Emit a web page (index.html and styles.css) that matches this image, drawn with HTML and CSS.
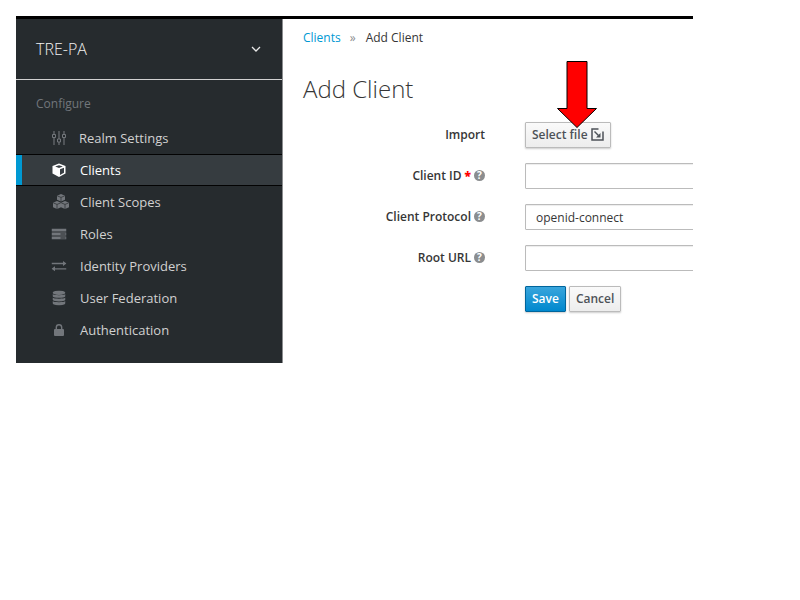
FILE: index.html
```html
<!DOCTYPE html>
<html>
<head>
<title>Add Client</title>
<meta charset="utf-8" />
<link rel="stylesheet" href="styles.css">
</head>
<body>
<div class="frame">
  <div class="sidebar">
    <div class="realm">
      <span>TRE-PA</span>
      <svg class="chevron" width="10" height="6" viewBox="0 0 10 6"><path d="M1 1l4 4 4-4" fill="none" stroke="#e8e8e8" stroke-width="1.3"/></svg>
    </div>
    <div class="nav-head">Configure</div>
    <ul class="nav">
      <li class="first">
        <svg class="ico" width="14" height="14" viewBox="0 0 14 14"><path d="M2 0v14M7 0v14M12 0v14" stroke="#72767b" stroke-width="1.100" fill="none"/><path d="M.5 3.500h3v3h-3zM5.500 8h3v3h-3zM10.500 3.500h3v3h-3z" fill="#262b2e" stroke="#72767b"/></svg>
        <span>Realm Settings</span>
      </li>
      <li class="active">
        <svg class="ico" width="14" height="14" viewBox="0 0 14 14"><path d="M7 .5l6.500 2.500v7.500L7 14 .5 10.500V3z" fill="#fff"/><path d="M7 2.200l3.800 1.300L7 5 3.200 3.500z" fill="#393f44"/><path d="M8 6.300l4-1.500v5L8 12z" fill="#393f44"/></svg>
        <span>Clients</span>
      </li>
      <li>
        <svg class="ico wide" width="18" height="16" viewBox="0 0 18 16"><path d="M9 0l4 1.700v4L9 7.400 5 5.700v-4zM5 7l4 1.700v4.500L5 15l-4-1.800V8.700zM13 7l4 1.700v4.500L13 15l-4-1.800V8.700z" fill="#72767b"/><path d="M5.300 1.900L9 3.400l3.700-1.500M9 3.400v4M1.300 8.900L5 10.400l3.700-1.500M5 10.400V15M9.300 8.900l3.700 1.500 3.700-1.500M13 10.400V15" stroke="#262b2e" stroke-width=".7" fill="none"/></svg>
        <span>Client Scopes</span>
      </li>
      <li>
        <svg class="ico" width="15" height="11" viewBox="0 0 15 11"><path d="M0 0h15v3H0zM0 4h15v3H0zM0 8h15v3H0z" fill="#72767b"/><path d="M9 5.500h5M9 9.500h5" stroke="#262b2e"/></svg>
        <span>Roles</span>
      </li>
      <li>
        <svg class="ico" width="15" height="11" viewBox="0 0 15 11"><path d="M0 3h12.500M2 8.300h13" stroke="#72767b" stroke-width="1.300" fill="none"/><path d="M11.500 0.500L15 3l-3.500 2.500zM3.500 5.800L0 8.300l3.500 2.500z" fill="#72767b"/></svg>
        <span>Identity Providers</span>
      </li>
      <li>
        <svg class="ico" width="13" height="15" viewBox="0 0 13 15"><ellipse cx="6.500" cy="2.200" rx="6.500" ry="2.200" fill="#72767b"/><path d="M0 3.500c1 1.600 12 1.600 13 0v2.200c-1 2.200-12 2.200-13 0zM0 7c1 1.600 12 1.600 13 0v2.300c-1 2.200-12 2.200-13 0zM0 10.600c1 1.600 12 1.600 13 0v2.200c-1 2.800-12 2.800-13 0z" fill="#72767b"/></svg>
        <span>User Federation</span>
      </li>
      <li>
        <svg class="ico" width="10" height="12" viewBox="0 0 10 12"><path d="M2.300 5V3.500a2.700 2.700 0 0 1 5.400 0V5" fill="none" stroke="#72767b" stroke-width="1.400"/><rect y="5" width="10" height="7" rx="1" fill="#72767b"/></svg>
        <span>Authentication</span>
      </li>
    </ul>
  </div>

  <div class="content">
    <div class="crumbs">
      <a class="crumb-link">Clients</a>
      <span class="crumb-sep">&raquo;</span>
      <span>Add Client</span>
    </div>
    <h1>Add Client</h1>
    <form class="form">
      <label>Import</label>
      <div class="field"><button type="button" class="btn">Select file
        <svg class="ext" width="13" height="13" viewBox="0 0 13 13"><path d="M7.500 1H1v11h11V3.500" fill="none" stroke="#4d5258" stroke-width="1.500"/><path d="M3.500 3.500l4 4" stroke="#4d5258" stroke-width="1.500" fill="none"/><path d="M9.500 5v4.500H5z" fill="#4d5258"/></svg>
      </button></div>

      <label>Client ID <b class="req">*</b> <i class="help">?</i></label>
      <div class="field"><div class="input"></div></div>

      <label>Client Protocol <i class="help">?</i></label>
      <div class="field"><div class="input">openid-connect</div></div>

      <label>Root URL <i class="help">?</i></label>
      <div class="field"><div class="input"></div></div>

      <span></span>
      <div class="field actions">
        <button type="button" class="btn primary">Save</button>
        <button type="button" class="btn">Cancel</button>
      </div>
    </form>
  </div>

  <svg class="arrow" width="42" height="68" viewBox="0 0 42 68"><path d="M11 .5h20v47h9.500L21 66.500 1.500 47.500H11z" fill="#f00" stroke="#000"/></svg>
</div>
</body>
</html>
```

FILE: styles.css
```css
body {
  margin: 0;
  background: #fff;
  font-family: "Open Sans", "Liberation Sans", sans-serif;
  font-size: 12px;
  color: #363636;
}
.frame {
  position: relative;
  display: flex;
  align-items: flex-start;
  width: 677px;
  height: 347px;
  margin: 16px 0 0 16px;
  border-top: 3px solid #000;
  box-sizing: border-box;
  overflow: hidden;
}
.sidebar {
  width: 266px;
  height: 344px;
  flex: none;
  background: #262b2e;
  color: #dfdfdf;
  border-right: 1px solid #8b8d8f;
}
.realm {
  display: flex;
  align-items: center;
  justify-content: space-between;
  height: 60px;
  padding: 0 21px 0 20px;
  border-bottom: 1px solid #d1d1d1;
  font-size: 16px;
  font-weight: 300;
  color: #f1f1f1;
}
.nav-head {
  margin-top: 16px;
  padding-left: 20px;
  font-size: 12px;
  line-height: 16px;
  color: #72767b;
}
.nav {
  list-style: none;
  margin: 0;
  padding: 0;
}
.nav li {
  display: flex;
  align-items: center;
  height: 32px;
  padding-left: 64px;
  position: relative;
  font-size: 13px;
  color: #d1d1d1;
}
.nav li.first {
  margin-top: 10px;
  padding-left: 63px;
}
.nav li.active {
  height: 30px;
  border-top: 1px solid #030303;
  border-bottom: 1px solid #030303;
  background: #363c40;
  color: #fff;
}
.nav li.active::before {
  content: "";
  position: absolute;
  left: 0;
  top: 0;
  bottom: 0;
  width: 6px;
  background: #0099d3;
}
.ico {
  position: absolute;
  left: 43px;
  top: 50%;
  transform: translate(-50%, -50%);
}
.ico.wide {
  left: 45px;
}
.content {
  flex: 1;
  padding-left: 20px;
}
.crumbs {
  display: flex;
  gap: 9px;
  margin-top: 9px;
  line-height: 20px;
  font-size: 12px;
}
.crumb-link {
  color: #0099d3;
}
.crumb-sep {
  margin-right: 1px;
  color: #8b8d8f;
}
h1 {
  margin: 25px 0 0;
  font-size: 24px;
  line-height: 32px;
  font-weight: 300;
}
.form {
  display: grid;
  grid-template-columns: 182px 1fr;
  column-gap: 40px;
  row-gap: 15px;
  margin-top: 17px;
  width: 620px;
}
.form label {
  display: flex;
  align-items: center;
  justify-content: flex-end;
  gap: 3px;
  box-sizing: border-box;
  height: 26px;
  padding-bottom: 2px;
  font-weight: 600;
}
.field {
  display: flex;
}
.req {
  color: #f00;
  font-size: 12px;
}
.help {
  display: inline-block;
  width: 11px;
  height: 11px;
  border-radius: 50%;
  background: #8b8d8f;
  color: #fff;
  font-size: 10px;
  font-style: normal;
  font-weight: 700;
  line-height: 11px;
  text-align: center;
}
.input {
  height: 26px;
  box-sizing: border-box;
  border: 1px solid #bbb;
  border-radius: 1px;
  padding: 0 10px;
  line-height: 26px;
  width: 260px;
  box-shadow: inset 0 1px 1px rgba(3, 3, 3, .075);
}
.btn {
  height: 26px;
  padding: 0 6px 2px;
  border: 1px solid #bbb;
  border-radius: 1px;
  background: linear-gradient(#fafafa, #ededed);
  box-shadow: 0 1px 2px rgba(3, 3, 3, .2);
  font-family: inherit;
  font-size: 12px;
  font-weight: 600;
  color: #4d5258;
}
.ext {
  vertical-align: -2px;
}
.actions {
  gap: 3px;
}
.primary {
  background: linear-gradient(#39a5dc, #0088ce);
  border-color: #00659c;
  color: #fff;
}
.arrow {
  position: absolute;
  left: 540px;
  top: 42px;
}
```
